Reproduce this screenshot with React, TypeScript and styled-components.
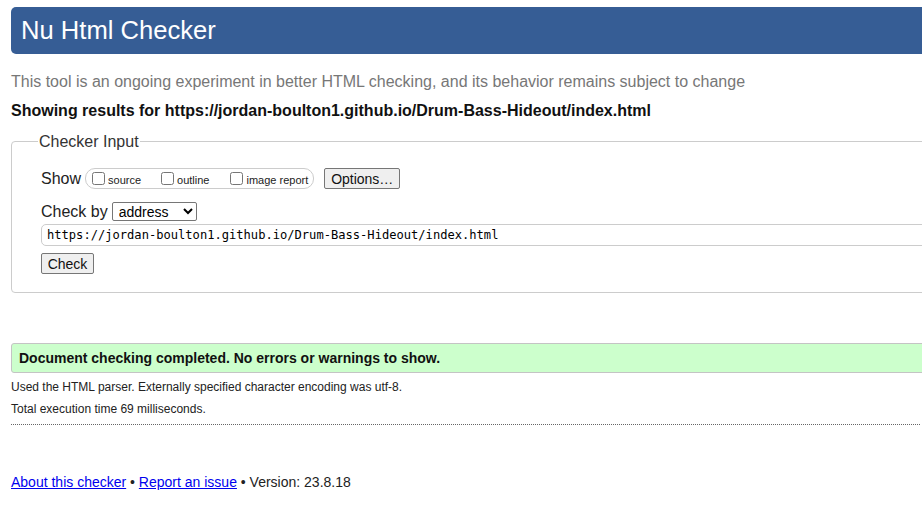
import React from "react";
import styled, { createGlobalStyle } from "styled-components";

const Global = createGlobalStyle`
  html, body { margin: 0; padding: 0; background: #fff; overflow: hidden; }
  body { font-family: "Liberation Sans", Arial, sans-serif; color: #222; }
`;

const Page = styled.div`
  width: 1300px;
  padding: 7px 0 0 11px;
  box-sizing: border-box;
`;

const Header = styled.h1`
  margin: 0;
  height: 47px;
  box-sizing: border-box;
  background: #365d95;
  color: #fff;
  border-radius: 5px;
  font-size: 25.6px;
  font-weight: normal;
  display: flex;
  align-items: center;
  padding: 0 0 1px 10px;
`;

const Lede = styled.p`
  margin: 18px 0 0;
  font-size: 16px;
  line-height: 19px;
  color: #777;
`;

const Results = styled.p`
  margin: 10px 0 0;
  font-size: 16px;
  line-height: 19px;
  font-weight: bold;
  color: #111;
`;

const Fieldset = styled.fieldset`
  margin: 12px 0 0;
  padding: 0 0 18px 29px;
  border: 1px solid #ccc;
  border-radius: 4px;
  min-width: 0;
`;

const Legend = styled.legend`
  font-size: 16px;
  line-height: 19px;
  color: #333;
  padding: 0 1px;
  margin-left: -3px;
`;

const Row = styled.div<{ $top: number }>`
  display: flex;
  align-items: center;
  margin-top: ${(p) => p.$top}px;
`;

const Label = styled.span`
  font-size: 16px;
  line-height: 21px;
  color: #222;
  margin-right: 4px;
`;

const Group = styled.span`
  display: inline-flex;
  align-items: center;
  height: 21px;
  box-sizing: border-box;
  border: 1px solid #ccc;
  border-radius: 10px;
  padding: 0 5px 0 1px;
  margin-right: 10px;
`;

const Check = styled.input`
  width: 13px;
  height: 13px;
  margin: 0 3px 0 5px;
`;

const CheckLabel = styled.label<{ $gap: number }>`
  font-size: 11px;
  margin-right: ${(p) => p.$gap}px;
  color: #222;
  padding-top: 2px;
`;

const Button = styled.button<{ $w: number }>`
  width: ${(p) => p.$w}px;
  height: 21px;
  box-sizing: border-box;
  font-family: "Liberation Sans", Arial, sans-serif;
  font-size: 14px;
  color: #111;
  background: #efefef;
  border: 1px solid #767676;
  border-radius: 2px;
  padding: 0;
`;

const Select = styled.select`
  width: 85px;
  height: 19px;
  box-sizing: border-box;
  font-family: "Liberation Sans", Arial, sans-serif;
  font-size: 14px;
  color: #000;
  border: 1px solid #767676;
  border-radius: 2px;
  padding: 0 0 0 2px;
  background: #fff;
`;

const UrlInput = styled.input`
  display: block;
  width: 1400px;
  height: 22px;
  box-sizing: border-box;
  margin-top: 2px;
  border: 1px solid #ccc;
  border-radius: 5px;
  padding: 0 5px;
  font-family: "DejaVu Sans Mono", "Liberation Mono", monospace;
  font-size: 12.1px;
  color: #000;
  outline: none;
`;

const Success = styled.p`
  margin: 50px 0 0;
  height: 30px;
  box-sizing: border-box;
  background: #ccffcc;
  border: 1px solid #c4c4c4;
  border-radius: 3px;
  padding: 0 0 0 7px;
  display: flex;
  align-items: center;
  font-weight: bold;
  font-size: 14px;
  color: #111;
`;

const Detail = styled.p<{ $top: number }>`
  margin: ${(p) => p.$top}px 0 0;
  font-size: 12px;
  line-height: 14px;
  color: #222;
`;

const Rule = styled.hr`
  width: 909px;
  margin: 8px 0 0;
  border: 0;
  border-top: 1px dotted #666;
  height: 0;
`;

const Footer = styled.p`
  margin: 49px 0 0;
  font-size: 14px;
  line-height: 17px;
  color: #222;
`;

const Link = styled.a`
  color: #0000ee;
  text-decoration: underline;
`;

export default function App() {
  return (
    <>
      <Global />
      <Page>
        <Header>Nu Html Checker</Header>
        <Lede>
          This tool is an ongoing experiment in better HTML checking, and its
          behavior remains subject to change
        </Lede>
        <Results>
          Showing results for https://jordan-boulton1.github.io/Drum-Bass-Hideout/index.html
        </Results>
        <Fieldset>
          <Legend>Checker Input</Legend>
          <Row $top={17}>
            <Label>Show</Label>
            <Group>
              <Check type="checkbox" id="src" />
              <CheckLabel htmlFor="src" $gap={15}>source</CheckLabel>
              <Check type="checkbox" id="out" />
              <CheckLabel htmlFor="out" $gap={16}>outline</CheckLabel>
              <Check type="checkbox" id="img" />
              <CheckLabel htmlFor="img" $gap={0}>image report</CheckLabel>
            </Group>
            <Button $w={76}>Options…</Button>
          </Row>
          <Row $top={12}>
            <Label>Check by</Label>
            <Select defaultValue="address">
              <option value="address">address</option>
              <option value="file">file upload</option>
              <option value="text">text input</option>
            </Select>
          </Row>
          <UrlInput
            type="url"
            readOnly
            value="https://jordan-boulton1.github.io/Drum-Bass-Hideout/index.html"
          />
          <Row $top={7}>
            <Button $w={53}>Check</Button>
          </Row>
        </Fieldset>
        <Success>Document checking completed. No errors or warnings to show.</Success>
        <Detail $top={7}>
          Used the HTML parser. Externally specified character encoding was utf-8.
        </Detail>
        <Detail $top={8}>Total execution time 69 milliseconds.</Detail>
        <Rule />
        <Footer>
          <Link href="#">About this checker</Link> •{" "}
          <Link href="#">Report an issue</Link> • Version: 23.8.18
        </Footer>
      </Page>
    </>
  );
}
